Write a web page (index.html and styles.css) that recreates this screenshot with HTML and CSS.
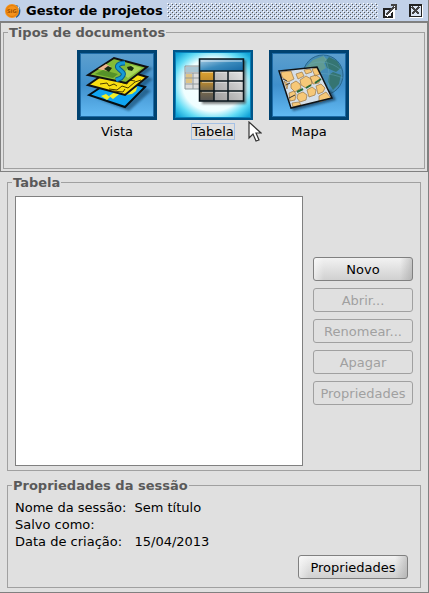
FILE: index.html
```html
<!DOCTYPE html>
<html lang="pt-BR">
<head>
    <meta charset="UTF-8">
    <meta name="viewport" content="width=device-width, initial-scale=1.0">
    <title>Gestor de projetos</title>
    <link rel="stylesheet" href="styles.css">
</head>
<body>
    <div class="window">
        <header class="titlebar">
            <svg class="app-icon" width="16" height="16" viewBox="0 0 16 16">
                <path d="M10 2c7 0 7 11 1 13z" fill="#1d5f9f"/>
                <path d="M13 3l1 3-1 2" stroke="#dcebf7" fill="none"/>
                <circle cx="7" cy="8" r="7" fill="#f6921a"/>
                <circle cx="7" cy="8" r="5.5" fill="none" stroke="#e07d0c"/>
                <text x="2" y="10" font-size="5" font-weight="bold" fill="#9c5000">SIG</text>
            </svg>
            <h1>Gestor de projetos</h1>
            <div class="grip"></div>
            <button class="win-button" aria-label="Maximizar">
                <svg width="16" height="16" viewBox="0 0 16 16" shape-rendering="crispEdges">
                    <path d="M3 6h10v10H3z" fill="#fff"/>
                    <path d="M2 6h8v8H2z" fill="#dce6f5" stroke="#222" stroke-width="1.500"/>
                    <path d="M4 13L13 4" stroke="#fff" stroke-width="3"/>
                    <path d="M4 12l8-8" stroke="#444" stroke-width="2"/>
                    <path d="M9 1h6v6h-2V3H9z" fill="#444"/>
                </svg>
            </button>
            <button class="win-button" aria-label="Fechar">
                <svg width="16" height="16" viewBox="0 0 16 16" shape-rendering="crispEdges">
                    <path d="M2 2h13v13H2z" fill="#fff"/>
                    <path d="M1 1h13v13H1z" fill="#222"/>
                    <path d="M3 3h10v10H3z" fill="#dce6f5"/>
                    <path d="M4 4l7 7M11 4l-7 7" stroke="#444" stroke-width="2"/>
                </svg>
            </button>
        </header>

        <section class="types-panel">
            <fieldset class="types">
                <legend>Tipos de documentos</legend>
                <button class="type">
                    <svg class="type-icon" width="80" height="70" viewBox="0 0 80 70">
                        <defs>
                            <linearGradient id="blue" x1="0" y1="0" x2="0" y2="1">
                                <stop offset="0" stop-color="#5c9fce"/>
                                <stop offset="0.5" stop-color="#3f8fcc"/>
                                <stop offset="1" stop-color="#62b9f2"/>
                            </linearGradient>
                            <filter id="soft"><feGaussianBlur stdDeviation="1"/></filter>
                        </defs>
                        <path d="M0 0h80v70H0z" fill="#004270"/>
                        <path d="M3 3h74v64H3z" fill="#1e6ba6"/>
                        <path d="M4 4h72v62H4z" fill="url(#blue)"/>
                        <g fill="#184c70" opacity="0.65" filter="url(#soft)">
                            <path d="M18 28l35 9 23-19-7-1-20 14z"/>
                            <path d="M18 38l35 11 23-20-6-2-22 16z"/>
                            <path d="M18 48l34 13 22-20-6-3-20 17z"/>
                        </g>
                        <path d="M12 45l26-17 30 9-20 20z" fill="#10a5f2" stroke="#050d10" stroke-width="2"/>
                        <path d="M24 46l5-2 4 3-3 3zM36 49l9-7 8-2-5 5 7-1 4-3 1-4-12-2-16 11z" fill="#f2ee26"/>
                        <path d="M11 35l26-18 33 10-22 18z" fill="#f9df12" stroke="#111" stroke-width="2"/>
                        <path d="M23 34l7-1 2 3 5-2 3 2M32 39l8 1 5-4 6 2 7-6 6-2M43 32l7 2 2-4 6 1M36 41l10 1 2-3" fill="none" stroke="#4b3b00" stroke-width="1"/>
                        <path d="M11 25l26-17 33 9-21 16z" fill="#83bb38" stroke="#111" stroke-width="2"/>
                        <path d="M21 19l8-5 5 3-4 4z" fill="#efb58e"/>
                        <path d="M18 24l8-4 15 4-5 4z" fill="#559229"/>
                        <path d="M54 15l11 3-14 10-5-4z" fill="#a9d75b"/>
                        <path d="M27 19l4-3 4 2-3 4zM50 17l4-1 3 2-2 3-4-1z" fill="#182c12"/>
                        <path d="M48 13c-6 0-10 3-6 6 5 4 6 5 2 9l-5 2" fill="none" stroke="#075b91" stroke-width="5"/>
                        <path d="M48 13c-6 0-10 3-6 6 5 4 6 5 2 9l-5 2" fill="none" stroke="#159bd5" stroke-width="3"/>
                    </svg>
                    <span class="type-name">Vista</span>
                </button>
                <button class="type selected">
                    <svg class="type-icon" width="80" height="70" viewBox="0 0 80 70">
                        <defs>
                            <radialGradient id="glow" cx="0.5" cy="0.5" r="0.68">
                                <stop offset="0" stop-color="#fff"/>
                                <stop offset="0.6" stop-color="#effeff"/>
                                <stop offset="0.8" stop-color="#62dcf5"/>
                                <stop offset="1" stop-color="#10a4d8"/>
                            </radialGradient>
                            <linearGradient id="head" x1="0" y1="0" x2="1" y2="1">
                                <stop offset="0" stop-color="#a9cde5"/>
                                <stop offset="0.5" stop-color="#3b8bbd"/>
                                <stop offset="1" stop-color="#1568a4"/>
                            </linearGradient>
                            <linearGradient id="cells" x1="1" y1="0" x2="0" y2="1">
                                <stop offset="0" stop-color="#f5f5f5"/>
                                <stop offset="1" stop-color="#888"/>
                            </linearGradient>
                            <linearGradient id="first" x1="0" y1="0" x2="0" y2="1">
                                <stop offset="0" stop-color="#e0a431"/>
                                <stop offset="0.35" stop-color="#bd8a2c"/>
                                <stop offset="0.65" stop-color="#7b6b4c"/>
                                <stop offset="1" stop-color="#555"/>
                            </linearGradient>
                        </defs>
                        <path d="M0 0h80v70H0z" fill="#00568a"/>
                        <path d="M2 2h76v66H2z" fill="#0780b8"/>
                        <path d="M3 3h74v64H3z" fill="url(#glow)"/>
                        <path d="M12 16h16v23H12z" fill="#ddd" stroke="#8b979b"/>
                        <path d="M13 17h14v5H13z" fill="#a9c6d4"/>
                        <path d="M13 24h6v9h-6z" fill="#dfc486"/>
                        <path d="M12 23h15M12 28h15M12 34h15M20 23v16" stroke="#92999b"/>
                        <path d="M29 10h44v44H29z" fill="#222" opacity="0.55" filter="url(#soft)"/>
                        <path d="M27 9h43v42H27z" fill="url(#cells)"/>
                        <path d="M27 21h14v30H27z" fill="url(#first)"/>
                        <path d="M27 9h43v12H27z" fill="url(#head)"/>
                        <path d="M29 22h11M29 32h11M29 42h11M43 22h11M43 32h11M43 42h11M57 22h11M57 32h11M57 42h11M28 11h41" stroke="#fff" opacity="0.75"/>
                        <path d="M26.500 9h44v42h-44zM27 21h43M27 31h43M27 41h43M41 21v30M55 21v30" fill="none" stroke="#0a171e" stroke-width="1.500"/>
                    </svg>
                    <span class="type-name">Tabela</span>
                </button>
                <button class="type">
                    <svg class="type-icon" width="80" height="70" viewBox="0 0 80 70">
                        <path d="M0 0h80v70H0z" fill="#004270"/>
                        <path d="M3 3h74v64H3z" fill="#1e6ba6"/>
                        <path d="M4 4h72v62H4z" fill="url(#blue)"/>
                        <circle cx="54" cy="25" r="20" fill="#438bb5" stroke="#28668d"/>
                        <path d="M37 17l7-7 10-4 5 4-4 3 2 5-5 3-4 9-6-6-6-1z" fill="#609b94"/>
                        <path d="M60 7l8 4 4 7-5 4-9-4-2-6zM64 22l8 3-2 9-6 6-5-8 1-7z" fill="#357572"/>
                        <path d="M40 15c8-5 22-4 32 5M35 25c12-3 27-2 39 3M54 5c7 10 8 27 3 40" fill="none" stroke="#69a9bd" opacity="0.4"/>
                        <path d="M24 61l43-11-5-10-40 15z" fill="#123b5a" opacity="0.7" filter="url(#soft)"/>
                        <path d="M10 21l38-4 15 31-41 10z" fill="#d6dfe8"/>
                        <g fill="#f6c878" stroke="#9a7545" stroke-width="0.700">
                            <path d="M12 22l10-1 3 8-6 3-6-5zM27 24l6-2 2 4-6 3zM35 20l6-1 2 3-6 2z"/>
                            <path d="M43 19l5-1 3 6-5 2zM31 30l6-4 5 3 1 5-6 4-5-3zM41 27l6-2 4 3-1 5-6 1z"/>
                            <path d="M15 31l4 3-1 5zM22 34l5-3 4 3 1 4-6 4-4-4zM20 43l5-2 2 3-1 6-5 1z"/>
                            <path d="M29 44l5-2 4 3-1 5-6 2-3-4zM38 40l5-3 4 3-1 5-6 2zM47 36l5-2 4 4-2 4-5 2z"/>
                            <path d="M23 53l7-1 2 3-8 2zM50 46l7-4 5 6-12 4z"/>
                        </g>
                        <path d="M28 42l6-3M37 38l5-3M46 33l6-4" stroke="#296a36" stroke-width="2"/>
                        <path d="M14 29l4 2M20 48l6-3M17 35l4-2" stroke="#333" stroke-width="1"/>
                        <path d="M10 21l38-4 15 31-41 10z" fill="none" stroke="#101315" stroke-width="1.500"/>
                    </svg>
                    <span class="type-name">Mapa</span>
                </button>
                <svg class="cursor" width="14" height="22" viewBox="0 0 14 22">
                    <path d="M1 1v16l4-4 3 7 3-1-3-7h5z" fill="#fff" stroke="#333" stroke-width="1.200"/>
                </svg>
            </fieldset>
        </section>

        <main class="content">
            <fieldset class="documents">
                <legend>Tabela</legend>
                <div class="document-list" role="listbox" aria-label="Tabela"></div>
                <div class="actions">
                    <button class="button">Novo</button>
                    <button class="button" disabled>Abrir...</button>
                    <button class="button" disabled>Renomear...</button>
                    <button class="button" disabled>Apagar</button>
                    <button class="button" disabled>Propriedades</button>
                </div>
            </fieldset>

            <fieldset class="session">
                <legend>Propriedades da sessão</legend>
                <dl class="session-info">
                    <dt>Nome da sessão:</dt>
                    <dd>Sem título</dd>
                    <dt>Salvo como:</dt>
                    <dd></dd>
                    <dt>Data de criação:</dt>
                    <dd>15/04/2013</dd>
                </dl>
                <button class="button session-button">Propriedades</button>
            </fieldset>
        </main>
    </div>
</body>
</html>
```
FILE: styles.css
```css
* {
    box-sizing: border-box;
}

body {
    margin: 0;
    font-family: "DejaVu Sans", sans-serif;
    font-size: 13px;
    color: #000;
    background-color: #e0e0e0;
}

button {
    font: inherit;
    color: inherit;
}

.window {
    display: flex;
    flex-direction: column;
    min-height: 100vh;
    border-right: 1px solid #808080;
    border-bottom: 1px solid #808080;
}

/* title bar */
.titlebar {
    display: flex;
    align-items: center;
    height: 22px;
    padding: 0 4px 0 5px;
    background-color: #c2d1e8;
    border-bottom: 1px solid #808080;
}

.titlebar h1 {
    margin: 0 4px 0 5px;
    font-size: 13px;
    line-height: 20px;
}

/* white and dark dots on a 4px tile */
.grip {
    flex: 1;
    height: 16px;
    margin-right: 4px;
    background-image:
        conic-gradient(from 270deg at 1px 1px, #fff 90deg, transparent 0),
        conic-gradient(from 270deg at 1px 1px, #fff 90deg, transparent 0),
        conic-gradient(from 270deg at 1px 1px, #555 90deg, transparent 0),
        conic-gradient(from 270deg at 1px 1px, #555 90deg, transparent 0);
    background-position: 0 0, 2px 2px, 1px 1px, 3px 3px;
    background-size: 4px 4px;
}

.win-button {
    display: flex;
    padding: 0;
    border: none;
    background: none;
}

.win-button + .win-button {
    margin-left: 10px;
}

/* group boxes */
fieldset {
    min-width: 0;
    margin: 0;
    border: 1px solid #a0a0a0;
}

legend {
    margin-left: -3px;
    padding: 2px 1px 0;
    font-weight: bold;
    line-height: 16px;
    color: #5a5a5a;
}

.types-panel {
    padding: 0 2px 2px;
    border: 1px solid #808080;
}

.types {
    position: relative;
    display: flex;
    justify-content: center;
    gap: 16px;
    padding: 9px 9px 28px 7px;
}

.type {
    display: flex;
    flex-direction: column;
    align-items: center;
    gap: 3px;
    padding: 0;
    border: none;
    background: none;
}

.type-icon {
    display: block;
}

.type-name {
    border: 1px solid transparent;
    line-height: 15px;
}

.selected .type-name {
    border-color: #a5c1e5;
}

.cursor {
    position: absolute;
    left: 244px;
    top: 80px;
}

/* documents and session */
.content {
    flex: 1;
    display: flex;
    flex-direction: column;
    gap: 5px;
    padding: 1px 7px 4px;
}

.documents {
    display: flex;
    align-items: center;
    gap: 10px;
    padding: 5px 7px 4px;
}

.document-list {
    flex: 1;
    align-self: stretch;
    min-height: 270px;
    background-color: #fff;
    border: 1px solid #808080;
}

.actions {
    display: flex;
    flex-direction: column;
    gap: 7px;
    width: 100px;
}

.button {
    height: 24px;
    padding: 0;
    border: 1px solid #808080;
    border-radius: 3px;
    background: linear-gradient(to right, rgba(255, 255, 255, 0.5), transparent 10px calc(100% - 12px), rgba(140, 140, 140, 0.4)), linear-gradient(#f2f2f2, #d0d0d0);
}

.button:disabled {
    border-color: #a0a0a0;
    background: none;
    color: #a0a0a0;
}

.session {
    display: flex;
    flex-direction: column;
    padding: 5px 12px 8px 7px;
}

.session-info {
    display: grid;
    grid-template-columns: max-content 1fr;
    column-gap: 8px;
    grid-auto-rows: 17px;
    margin: 0;
    line-height: 17px;
}

.session-info dd {
    margin: 0;
}

.session-button {
    align-self: flex-end;
    width: 110px;
    margin-top: 5px;
}
```
